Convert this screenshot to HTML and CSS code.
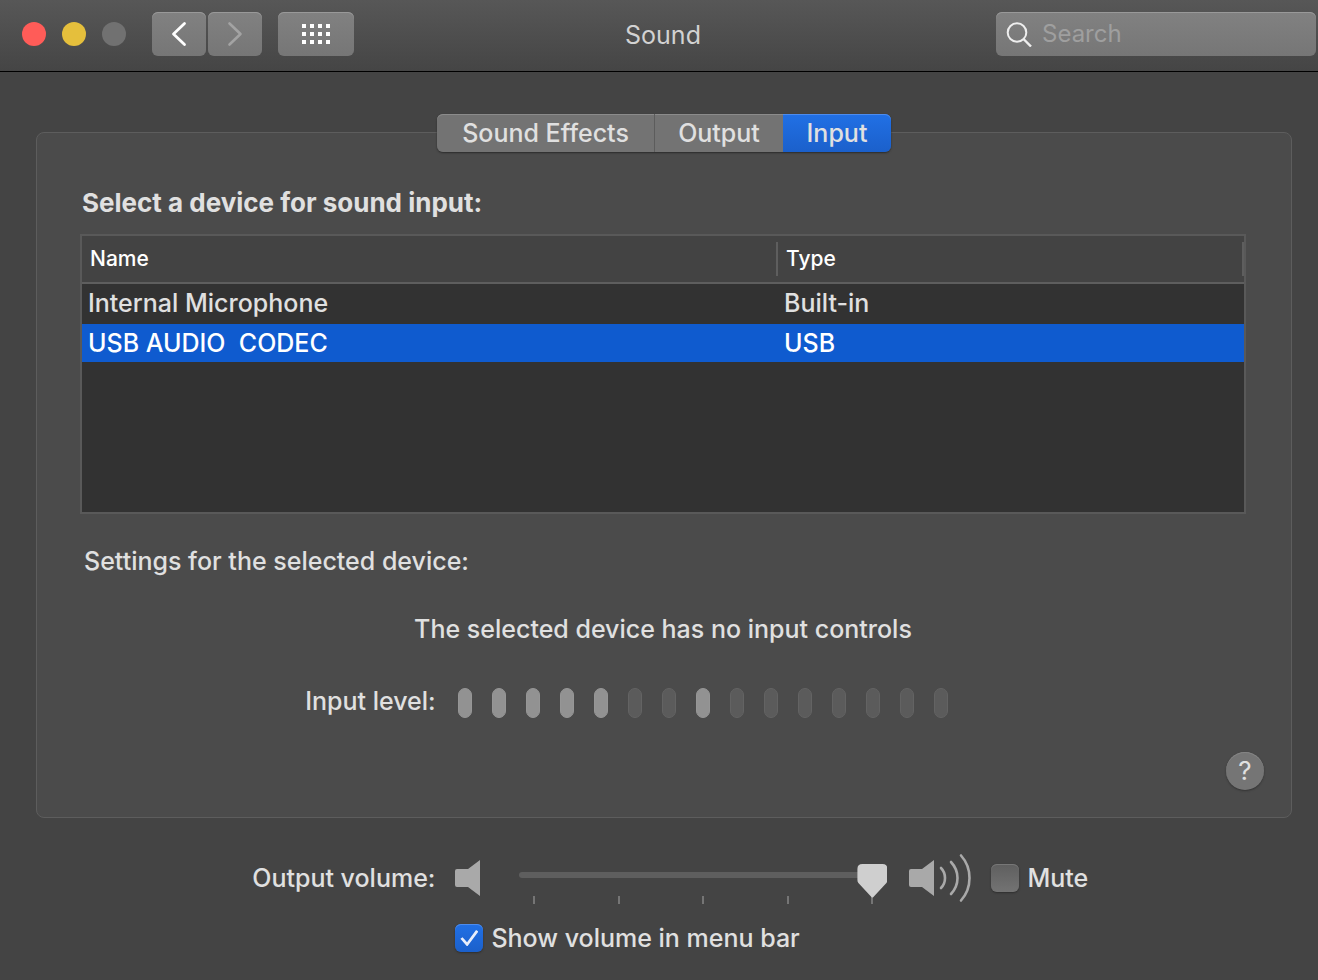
FILE: index.html
```html
<!DOCTYPE html>
<html lang="en">
<head>
<meta charset="utf-8">
<title>Sound</title>
<link rel="stylesheet" href="styles.css">
</head>
<body>
<header class="toolbar">
  <div class="toolbar-left">
    <div class="lights">
      <button class="light light-close" aria-label="Close"></button>
      <button class="light light-min" aria-label="Minimize"></button>
      <button class="light light-zoom" aria-label="Zoom" disabled></button>
    </div>
    <div class="nav">
      <button class="tool" aria-label="Back">
        <svg width="54" height="44" viewBox="0 0 54 44"><path d="M32.500 11.500L21.500 22L32.500 32.500" fill="none" stroke="#fff" stroke-width="2.800" stroke-linecap="round" stroke-linejoin="round"/></svg>
      </button>
      <button class="tool" aria-label="Forward" disabled>
        <svg width="54" height="44" viewBox="0 0 54 44"><path d="M21.500 11.500L32.500 22L21.500 32.500" fill="none" stroke="#a3a3a3" stroke-width="2.600" stroke-linecap="round" stroke-linejoin="round"/></svg>
      </button>
    </div>
    <button class="tool tool-wide" aria-label="Show All">
      <svg width="28" height="20" viewBox="0 0 28 20" fill="#fff"><path d="M0 0h4v4H0zM8 0h4v4H8zM16 0h4v4h-4zM24 0h4v4h-4zM0 8h4v4H0zM8 8h4v4H8zM16 8h4v4h-4zM24 8h4v4h-4zM0 16h4v4H0zM8 16h4v4H8zM16 16h4v4h-4zM24 16h4v4h-4z"/></svg>
    </button>
  </div>
  <h1 class="title">Sound</h1>
  <label class="search">
    <svg width="26" height="26" viewBox="0 0 26 26" fill="none" stroke="#eee" stroke-width="2"><circle cx="11" cy="11.500" r="9.300"/><path d="M17.500 18L25 25.500" stroke-width="2.400"/></svg>
    <input class="search-input" type="search" placeholder="Search" aria-label="Search">
  </label>
</header>

<main class="content">
  <div class="tabs" role="tablist">
    <button class="tab tab-effects" role="tab">Sound Effects</button>
    <button class="tab tab-output" role="tab">Output</button>
    <button class="tab tab-input" role="tab" aria-selected="true">Input</button>
  </div>

  <section class="panel">
    <div class="panel-body">
      <h2 class="heading">Select a device for sound input:</h2>
      <div class="device-frame">
        <table class="devices">
          <colgroup><col class="col-name"><col></colgroup>
          <thead><tr><th>Name</th><th>Type</th></tr></thead>
          <tbody>
            <tr><td>Internal Microphone</td><td>Built-in</td></tr>
            <tr class="selected"><td>USB AUDIO  CODEC</td><td>USB</td></tr>
          </tbody>
        </table>
      </div>
      <p class="settings">Settings for the selected device:</p>
      <p class="notice">The selected device has no input controls</p>
      <div class="level-row">
        <span class="row-label" id="level-label">Input level:</span>
        <div class="level" role="img" aria-labelledby="level-label">
          <i class="bar on"></i><i class="bar on"></i><i class="bar on"></i><i class="bar on"></i><i class="bar on"></i><i class="bar"></i><i class="bar"></i><i class="bar on"></i><i class="bar"></i><i class="bar"></i><i class="bar"></i><i class="bar"></i><i class="bar"></i><i class="bar"></i><i class="bar"></i>
        </div>
      </div>
    </div>
    <button class="help" aria-label="Help">?</button>
  </section>

  <div class="volume">
    <label class="row-label" for="volume">Output volume:</label>
    <div class="volume-controls">
      <svg width="26" height="38" viewBox="0 0 26 38" fill="#a9a9a9"><path d="M2 10H13L25 1V37L13 28H2Q0 28 0 26V12Q0 10 2 10Z"/></svg>
      <div class="slider">
        <div class="ticks"><i></i><i></i><i></i><i></i><i></i></div>
        <input class="range" id="volume" type="range" min="0" max="100" value="100">
      </div>
      <svg width="62" height="50" viewBox="0 0 62 50"><path d="M2 16H13L25 7V43L13 34H2Q0 34 0 32V18Q0 16 2 16Z" fill="#a9a9a9"/><g fill="none" stroke="#a9a9a9" stroke-width="2.600" stroke-linecap="round"><path d="M32 15Q36 19 36 25T32 35"/><path d="M42 9Q48.500 16 48.500 25T42 41"/><path d="M52 2.500Q60.500 12 60.500 25T52 47.500"/></g></svg>
      <label class="check"><input class="box" type="checkbox">Mute</label>
    </div>
    <label class="check check-menu"><input class="box" type="checkbox" checked>Show volume in menu bar</label>
  </div>
</main>
</body>
</html>
```
FILE: styles.css
```css
* { box-sizing: border-box; }

body {
  margin: 0;
  min-height: 100vh;
  background: #444;
  color: #e0e0e0;
  font: 450 25px/32px Inter, "Liberation Sans", sans-serif;
}

button, input { font: inherit; color: inherit; }
button { border: 0; padding: 0; }
h1, h2, p { margin: 0; }
svg { display: block; flex: none; }

.toolbar {
  display: grid;
  grid-template-columns: 1fr auto 1fr;
  align-items: center;
  height: 72px;
  padding: 0 2px 4px 10px;
  border-bottom: 1px solid #000;
  background: linear-gradient(#575757, #454545);
}
.toolbar-left, .lights, .nav { display: flex; align-items: center; }
.toolbar-left { gap: 16px; }
.lights { gap: 16px; margin: 0 10px 0 12px; }
.nav { gap: 2px; }
.light { width: 24px; height: 24px; border-radius: 50%; }
.light-close { background: #ff5c58; }
.light-min { background: #e5bf3c; }
.light-zoom { background: #717171; }

.tool {
  display: flex;
  align-items: center;
  justify-content: center;
  width: 54px;
  height: 44px;
  border-radius: 6px;
  background: linear-gradient(#818181, #767676);
  box-shadow: inset 0 1px #999;
}
.tool-wide { width: 76px; }
.title {
  padding-top: 2px;
  color: #d2d2d2;
  font-size: 25px;
  font-weight: 400;
}

.search {
  display: flex;
  align-items: center;
  justify-self: end;
  gap: 10px;
  width: 320px;
  height: 44px;
  padding-left: 10px;
  border-radius: 6px;
  background: linear-gradient(#818181, #767676);
  box-shadow: inset 0 1px #999;
}
.search-input {
  flex: 1;
  min-width: 0;
  height: 40px;
  padding: 0;
  border: 0;
  outline: 0;
  background: none;
  font-size: 24px;
  font-weight: 400;
}
.search-input::placeholder { color: #9f9f9f; }

.content { padding: 42px 26px 24px 36px; }

.tabs {
  position: relative;
  display: flex;
  width: max-content;
  height: 38px;
  margin: 0 auto;
  border-radius: 6px;
  box-shadow: 0 1px 2px #2b2b2b;
}
.tab {
  background: #737373;
  box-shadow: inset 0 1px #8b8b8b;
}
.tab-effects {
  width: 218px;
  border-right: 1px solid #5c5c5c;
  border-radius: 6px 0 0 6px;
}
.tab-output { width: 128px; }
.tab-input {
  width: 108px;
  border-radius: 0 6px 6px 0;
  background: linear-gradient(#2170e5, #1b60cb);
  box-shadow: inset 0 1px #4d8cee;
}

.panel {
  display: flex;
  flex-direction: column;
  gap: 34px;
  margin-top: -20px;
  padding: 54px 27px 27px 43px;
  border: 1px solid #5d5d5d;
  border-radius: 8px;
  background: #4b4b4b;
}
.panel-body { margin-right: 18px; }
.heading { padding-left: 2px; font-size: 26px; font-weight: 700; }

.device-frame {
  min-height: 280px;
  margin: 15px 0 31px;
  border: 2px solid #595959;
  background: #323232;
}
.devices {
  width: 100%;
  border-spacing: 0;
  table-layout: fixed;
  text-align: left;
}
.col-name { width: 59.9%; }
.devices th {
  height: 48px;
  padding: 0 8px;
  border-bottom: 2px solid #5e5e5e;
  background: linear-gradient(#5e5e5e, #5e5e5e) no-repeat right 6px / 2px 34px #434343;
  color: #fff;
  font-size: 21px;
  font-weight: 500;
}
.devices td {
  height: 40px;
  padding: 0 6px 2px;
  white-space: pre;
}
.devices .selected td {
  height: 38px;
  padding-bottom: 0;
  background: #0f5bcf;
  color: #fff;
}

.settings { padding-left: 4px; }
.notice { margin: 36px 0 40px; text-align: center; }

.level-row {
  display: grid;
  grid-template-columns: 30.5% 1fr;
  gap: 22px;
}
.row-label { text-align: right; white-space: nowrap; }
.level { display: flex; gap: 20px; padding-top: 3px; }
.bar {
  width: 14px;
  height: 30px;
  border: 1px solid #636363;
  border-radius: 7px;
  background: #5b5b5b;
}
.bar.on { border-color: #969696; background: #929292; }

.help {
  align-self: flex-end;
  width: 38px;
  height: 38px;
  border-radius: 50%;
  background: #757575;
  box-shadow: 0 1px 2px #333, inset 0 1px #858585;
  font-size: 26px;
  font-weight: 400;
}

.volume {
  display: grid;
  grid-template-columns: 31.8% 1fr;
  align-items: center;
  gap: 18px 20px;
  margin-top: 34px;
}
.volume-controls { display: flex; align-items: center; }
.slider {
  display: grid;
  flex: 0 1 368px;
  align-self: flex-end;
  height: 40px;
  margin: 12px 22px 0 38px;
}
.range, .ticks { grid-area: 1 / 1; }
.range {
  appearance: none;
  width: 100%;
  height: 22px;
  margin: 0;
  background: none;
}
.range::-webkit-slider-runnable-track {
  height: 6px;
  border-radius: 3px;
  background: #5e5e5e;
}
.range::-webkit-slider-thumb {
  appearance: none;
  width: 30px;
  height: 34px;
  margin-top: -8px;
  background: #cfcfcf;
  clip-path: path("M5 0H25Q30 0 30 5V16Q30 18 29 19L16 33Q15 34 14 33L1 19Q0 18 0 16V5Q0 0 5 0Z");
}
.ticks {
  display: flex;
  align-self: end;
  justify-content: space-between;
  padding: 0 14px;
}
.ticks i { width: 2px; height: 8px; background: #757575; }

.check { display: flex; align-items: center; gap: 8px; white-space: nowrap; }
.volume-controls .check { margin-left: 20px; }
.check-menu { grid-column: 2; }
.box {
  appearance: none;
  flex: none;
  width: 28px;
  height: 28px;
  margin: 0;
  border-radius: 6px;
  background: linear-gradient(#5f5f5f, #737373);
  box-shadow: 0 1px 2px #2e2e2e, inset 0 1px #777;
}
.box:checked {
  display: grid;
  place-items: center;
  background: linear-gradient(#2170e5, #1b60cb);
  box-shadow: 0 1px 2px #2e2e2e, inset 0 1px #4d8cee;
}
.box:checked::before {
  content: "";
  width: 18px;
  height: 16px;
  background: #e8eefb;
  clip-path: polygon(0 55%, 12% 45%, 37% 76%, 87% 0, 100% 10%, 40% 100%, 35% 100%);
}
```
